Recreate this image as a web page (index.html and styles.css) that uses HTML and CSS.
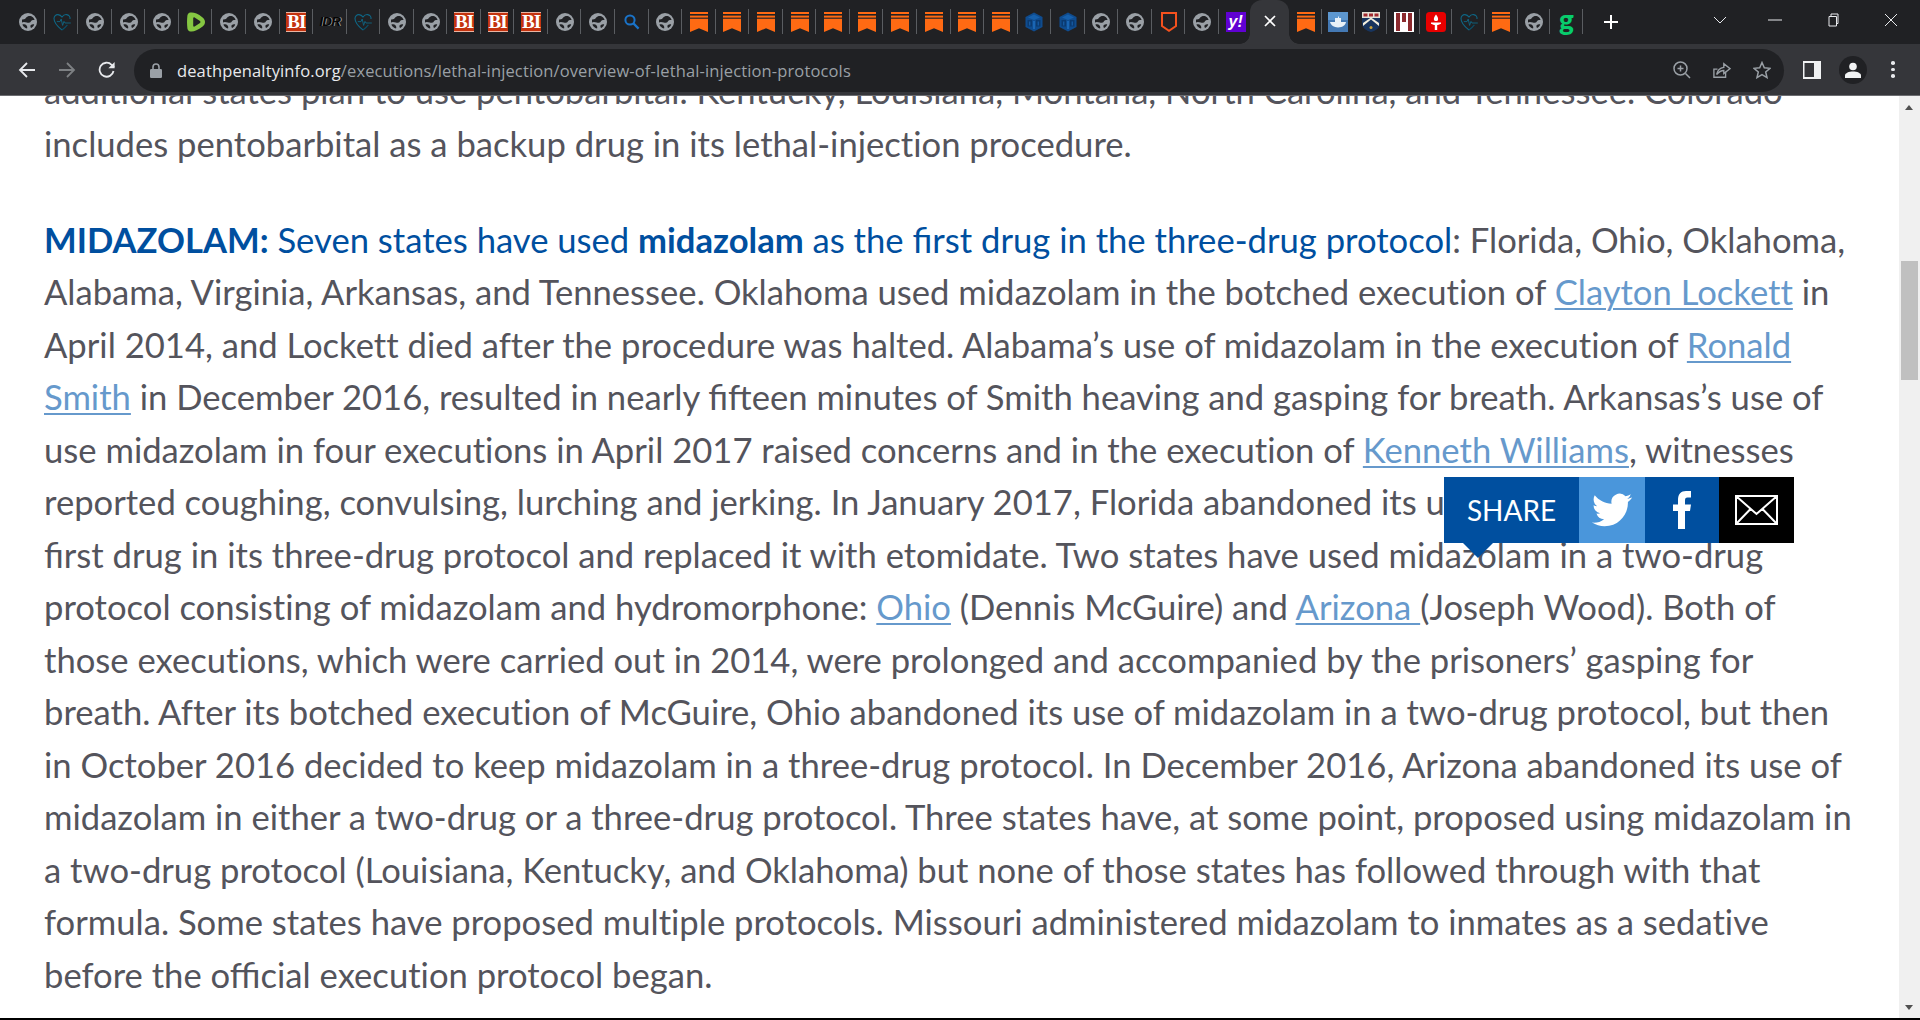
FILE: index.html
```html
<!DOCTYPE html>
<html lang="en">
<head>
<meta charset="utf-8">
<title>Overview of Lethal Injection Protocols</title>
<link rel="stylesheet" href="styles.css">
</head>
<body>
<svg class="defs" width="0" height="0" aria-hidden="true">
  <symbol id="globe" viewBox="0 0 18 18">
    <circle cx="9" cy="9" r="9" fill="#9aa0a6"/>
    <path d="M3 6.500C5 6.800 6.500 6 7.200 4.600 8.200 3 10.500 2.600 12.400 3.200 14 4 15.200 5.400 15.600 7 14 6.800 12.600 7.200 11.800 8.400 11 9.800 9.400 10.200 7.800 9.600 6 9 4.200 8.600 3 9.600Z" fill="#202124"/>
    <path d="M3.400 11.600C5 10.800 6.600 11.200 7.600 12.400 8.400 13.400 8.400 14.800 8 15.400 5.800 15.200 4.200 13.600 3.400 11.600Z" fill="#202124"/>
    <path d="M11.600 12.200C12.800 11.400 14.400 11 15.200 11.600 14.800 13 13.600 14.400 12.200 15 11.400 14.200 11.200 13 11.600 12.200Z" fill="#202124"/>
  </symbol>
  <symbol id="heart" viewBox="0 0 18 18">
    <path d="M9 17C5 14 1 10 1 5.600 1 3 3 1.400 5 1.600 6.600 1.800 8 2.600 9 4 10 2.600 12 1.400 13.600 1.600 15.800 1.900 17.400 3.600 17 6" fill="none" stroke="#0e6685" stroke-width="1.100"/>
    <path d="M3.800 8.600H7L8.200 6 9.600 12.400 11 8.400 12 10H17.800" fill="none" stroke="#0e6685" stroke-width=".9"/>
    <path d="M9 17C11 15.400 13 13.600 14.400 11.800" fill="none" stroke="#0a4f68" stroke-width="1.100"/>
  </symbol>
  <symbol id="rumble" viewBox="0 0 18 20">
    <path d="M3.400.6C1.800.8.6 2 .4 3.600-.1 8-.1 12 .4 16.400.6 18 1.800 19.200 3.400 19.400 6.400 19.800 10.400 18.800 15.600 14.600 18.800 12 18.800 8 15.600 5.400 10.400 1.200 6.400.2 3.400.6Z" fill="#85c742"/>
    <path d="M6.200 6.200V13.800C6.200 14.600 7 15 7.600 14.600L13 11C13.600 10.500 13.600 9.500 13 9L7.600 5.400C7 5 6.200 5.400 6.200 6.200Z" fill="#202124"/>
  </symbol>
  <symbol id="search" viewBox="0 0 18 18">
    <circle cx="7" cy="7" r="4.600" fill="none" stroke="#1a73c8" stroke-width="2"/>
    <path d="M10.400 10.400 15.600 15.600" stroke="#1a73c8" stroke-width="2.200"/>
  </symbol>
  <symbol id="bookmark" viewBox="0 0 18 20">
    <rect width="18" height="2" fill="#ff6a13"/>
    <rect y="3.600" width="18" height="2" fill="#ff6a13"/>
    <path d="M0 6.800H18V20L9 16.200 0 20Z" fill="#ff6a13"/>
  </symbol>
  <symbol id="cube" viewBox="0 0 18 20">
    <path d="M9 .5 17.500 5V15L9 19.500 .5 15V5Z" fill="#0f4c8f"/>
    <path d="M9 2.500 15 5.400 9 8 3 5.400Z" fill="#1660ac"/>
    <path d="M2.500 8H7V14.500H2.500ZM11 8H15.500V14.500H11Z" fill="#0b3a70"/>
    <path d="M8 9H10V17H8ZM4.300 9.500H5.300V13.500H4.300ZM12.700 9.500H13.700V13.500H12.700Z" fill="#1a66b4"/>
  </symbol>
  <symbol id="shield" viewBox="0 0 16 20">
    <path d="M1 1H15V14L8 18.800 1 14Z" fill="none" stroke="#f4511e" stroke-width="2"/>
  </symbol>
  <symbol id="docker" viewBox="0 0 20 20">
    <rect width="20" height="20" fill="#4479b4"/>
    <rect width="20" height="8" fill="#5d97cf"/>
    <path d="M2 10H7V6H10V4.500H11V6H13V10H18C17.600 13 15 15.400 10 15.400 6 15.400 3 13.400 2 10Z" fill="#e9f1f8"/>
  </symbol>
  <symbol id="crest" viewBox="0 0 18 20">
    <path d="M0 2H18V12C18 16 13 19 9 20 5 19 0 16 0 12Z" fill="#17345e"/>
    <rect width="18" height="6" y="0" fill="#e6e2d6"/>
    <rect x="1.500" y="1.500" width="4" height="3" fill="#a12a2f"/>
    <rect x="7" y="1.500" width="4" height="3" fill="#a12a2f"/>
    <rect x="12.500" y="1.500" width="4" height="3" fill="#a12a2f"/>
    <path d="M1 14 9 7.500 17 14V11L9 5.500 1 11Z" fill="#f3eedd"/>
    <circle cx="9" cy="15.500" r="1.500" fill="#c8a23c"/>
  </symbol>
  <symbol id="bars" viewBox="0 0 20 20">
    <rect width="20" height="20" fill="#fff"/>
    <path d="M2 1H6V19H2ZM8 1H12V10H8ZM14 1H18V19H14Z" fill="#8c2a2e"/>
  </symbol>
  <symbol id="torch" viewBox="0 0 20 20">
    <rect width="20" height="20" rx="3.500" fill="#e80000"/>
    <path d="M10 2.500C12 5 12.400 6.600 12 8 11.600 9.400 8.400 9.400 8 8 7.600 6.600 8 5 10 2.500Z" fill="#fff"/>
    <path d="M5 10.400H15V11.800L12 13H8L5 11.800ZM8.800 13H11.200V18H8.800Z" fill="#fff"/>
  </symbol>
  <symbol id="twitter" viewBox="0 0 24 24">
    <path d="M23.953 4.570a10 10 0 01-2.825.775 4.958 4.958 0 002.163-2.723c-.951.555-2.005.959-3.127 1.184a4.920 4.920 0 00-8.384 4.482C7.690 8.095 4.067 6.130 1.640 3.162a4.822 4.822 0 00-.666 2.475c0 1.710.870 3.213 2.188 4.096a4.904 4.904 0 01-2.228-.616v.060a4.923 4.923 0 003.946 4.827 4.996 4.996 0 01-2.212.085 4.936 4.936 0 004.604 3.417 9.867 9.867 0 01-6.102 2.105c-.390 0-.779-.023-1.170-.067a13.995 13.995 0 007.557 2.209c9.053 0 13.998-7.496 13.998-13.985 0-.210 0-.420-.015-.630A9.935 9.935 0 0024 4.590z" fill="#fff"/>
  </symbol>
</svg>

<header class="browser">
  <div class="strip">
    <div class="tabs tabs-left">
      <div class="tab sep"><svg class="fav"><use href="#globe"/></svg></div>
      <div class="tab sep"><svg class="fav"><use href="#heart"/></svg></div>
      <div class="tab sep"><svg class="fav"><use href="#globe"/></svg></div>
      <div class="tab sep"><svg class="fav"><use href="#globe"/></svg></div>
      <div class="tab sep"><svg class="fav"><use href="#globe"/></svg></div>
      <div class="tab sep"><svg class="fav tall"><use href="#rumble"/></svg></div>
      <div class="tab sep"><svg class="fav"><use href="#globe"/></svg></div>
      <div class="tab sep"><svg class="fav"><use href="#globe"/></svg></div>
      <div class="tab sep"><span class="ico-bi">BI</span></div>
      <div class="tab sep"><span class="ico-ldr">IDR</span></div>
      <div class="tab sep"><svg class="fav"><use href="#heart"/></svg></div>
      <div class="tab sep"><svg class="fav"><use href="#globe"/></svg></div>
      <div class="tab sep"><svg class="fav"><use href="#globe"/></svg></div>
      <div class="tab sep"><span class="ico-bi">BI</span></div>
      <div class="tab sep"><span class="ico-bi">BI</span></div>
      <div class="tab sep"><span class="ico-bi">BI</span></div>
      <div class="tab sep"><svg class="fav"><use href="#globe"/></svg></div>
      <div class="tab sep"><svg class="fav"><use href="#globe"/></svg></div>
      <div class="tab sep"><svg class="fav"><use href="#search"/></svg></div>
      <div class="tab sep"><svg class="fav"><use href="#globe"/></svg></div>
      <div class="tab sep"><svg class="fav tall"><use href="#bookmark"/></svg></div>
      <div class="tab sep"><svg class="fav tall"><use href="#bookmark"/></svg></div>
      <div class="tab sep"><svg class="fav tall"><use href="#bookmark"/></svg></div>
      <div class="tab sep"><svg class="fav tall"><use href="#bookmark"/></svg></div>
      <div class="tab sep"><svg class="fav tall"><use href="#bookmark"/></svg></div>
      <div class="tab sep"><svg class="fav tall"><use href="#bookmark"/></svg></div>
      <div class="tab sep"><svg class="fav tall"><use href="#bookmark"/></svg></div>
      <div class="tab sep"><svg class="fav tall"><use href="#bookmark"/></svg></div>
      <div class="tab sep"><svg class="fav tall"><use href="#bookmark"/></svg></div>
      <div class="tab sep"><svg class="fav tall"><use href="#bookmark"/></svg></div>
      <div class="tab sep"><svg class="fav tall"><use href="#cube"/></svg></div>
      <div class="tab sep"><svg class="fav tall"><use href="#cube"/></svg></div>
      <div class="tab sep"><svg class="fav"><use href="#globe"/></svg></div>
      <div class="tab sep"><svg class="fav"><use href="#globe"/></svg></div>
      <div class="tab sep"><svg class="fav tall"><use href="#shield"/></svg></div>
      <div class="tab sep"><svg class="fav"><use href="#globe"/></svg></div>
      <div class="tab"><span class="ico-yahoo">y!</span></div>
    </div>
    <div class="tab-active">
      <svg class="close-x" viewBox="0 0 12 12"><path d="M1 1 11 11M11 1 1 11"/></svg>
    </div>
    <div class="tabs tabs-right">
      <div class="tab sep"><svg class="fav tall"><use href="#bookmark"/></svg></div>
      <div class="tab sep"><svg class="fav wide"><use href="#docker"/></svg></div>
      <div class="tab sep"><svg class="fav tall"><use href="#crest"/></svg></div>
      <div class="tab sep"><svg class="fav wide"><use href="#bars"/></svg></div>
      <div class="tab sep"><svg class="fav wide"><use href="#torch"/></svg></div>
      <div class="tab sep"><svg class="fav"><use href="#heart"/></svg></div>
      <div class="tab sep"><svg class="fav tall"><use href="#bookmark"/></svg></div>
      <div class="tab sep"><svg class="fav"><use href="#globe"/></svg></div>
      <div class="tab sep"><span class="g-icon">g</span></div>
    </div>
    <svg class="new-tab" viewBox="0 0 16 16"><path d="M8 1V15M1 8H15"/></svg>
    <div class="window-controls">
      <svg class="win win-chevron" viewBox="0 0 14 14"><path d="M1 4 7 10 13 4"/></svg>
      <svg class="win win-min" viewBox="0 0 14 14"><path d="M0 7H14"/></svg>
      <svg class="win win-max" viewBox="0 0 14 14"><path d="M3 3.500H10.500V13H3ZM5 3.500V1H12V10.500H10.500"/></svg>
      <svg class="win win-close" viewBox="0 0 14 14"><path d="M1 1 13 13M13 1 1 13"/></svg>
    </div>
  </div>
  <div class="toolbar">
    <svg class="nav nav-back" viewBox="0 0 18 18"><path d="M17 9H2M9 2 2 9 9 16"/></svg>
    <svg class="nav nav-fwd" viewBox="0 0 18 18"><path d="M1 9H16M9 2 16 9 9 16"/></svg>
    <svg class="nav nav-reload" viewBox="0 0 18 18"><path d="M15.500 10A7 7 0 1 1 13.600 3.800L16 6.200"/><path class="nav-fill" d="M16.600 1V7.200H10.400Z"/></svg>
    <div class="omnibox">
      <svg class="lock" viewBox="0 0 12 15"><path d="M3 6V4A3 3 0 0 1 9 4V6" class="lock-shackle"/><rect y="6" width="12" height="9" rx="1.200" class="lock-body"/></svg>
      <div class="url"><span class="url-host">deathpenaltyinfo.org</span>/executions/lethal-injection/overview-of-lethal-injection-protocols</div>
      <div class="omni-actions">
        <svg class="omni-icon" viewBox="0 0 18 18"><circle cx="7.500" cy="7.500" r="6.500"/><path d="M12.500 12.500 17 17M7.500 4.500V10.500M4.500 7.500H10.500"/></svg>
        <svg class="omni-icon" viewBox="0 0 20 18"><path d="M14 11V17H1V8H5"/><path d="M4 14C5 9 8 6.500 12 6V2L19 7.500 12 13V9.500C9 9.500 6.500 11 4 14Z"/></svg>
        <svg class="omni-icon" viewBox="0 0 18 18"><path d="M9 1.500 11.300 6.700 17 7.300 12.700 11 14 16.600 9 13.700 4 16.600 5.300 11 1 7.300 6.700 6.700Z"/></svg>
      </div>
    </div>
    <svg class="panel" viewBox="0 0 18 18"><rect width="18" height="18" fill="#f1f3f4"/><rect x="1.500" y="2" width="9.500" height="14" fill="#35363a"/></svg>
    <div class="avatar">
      <svg viewBox="0 0 16 16"><circle cx="8" cy="4.500" r="3.800"/><path d="M0 16V13.500C0 11 4 9.500 8 9.500S16 11 16 13.500V16Z"/></svg>
    </div>
    <div class="menu-dots"><i></i><i></i><i></i></div>
  </div>
</header>

<main class="viewport">
  <div class="content">
    <article class="article">
      <p>additional states plan to use pentobarbital. Kentucky, Louisiana, Montana, North Carolina, and Tennessee. Colorado<br>includes pentobarbital as a backup drug in its lethal-injection procedure.</p>
      <p><strong class="blue">MIDAZOLAM:</strong> <span class="blue">Seven states have used <strong>midazolam</strong> as the <span class="lig">first</span> drug in the three-drug protocol</span>: Florida, Ohio, Oklahoma,<br>Alabama, Virginia, Arkansas, and Tennessee. Oklahoma used midazolam in the botched execution of <a href="#">Clayton Lockett</a> in<br>April 2014, and Lockett died after the procedure was halted. Alabama’s use of midazolam in the execution of <a href="#">Ronald<br>Smith</a> in December 2016, resulted in nearly <span class="lig">fifteen</span> minutes of Smith heaving and gasping for breath. Arkansas’s use of<br>use midazolam in four executions in April 2017 raised concerns and in the execution of <a href="#">Kenneth Williams</a>, witnesses<br>reported coughing, convulsing, lurching and jerking. In January 2017, Florida abandoned its use of midazolam as the<br><span class="lig">first</span> drug in its three-drug protocol and replaced it with etomidate. Two states have used midazolam in a two-drug<br>protocol consisting of midazolam and hydromorphone: <a href="#">Ohio</a> (Dennis McGuire) and <a href="#">Arizona </a>(Joseph Wood). Both of<br>those executions, which were carried out in 2014, were prolonged and accompanied by the prisoners’ gasping for<br>breath. After its botched execution of McGuire, Ohio abandoned its use of midazolam in a two-drug protocol, but then<br>in October 2016 decided to keep midazolam in a three-drug protocol. In December 2016, Arizona abandoned its use of<br>midazolam in either a two-drug or a three-drug protocol. Three states have, at some point, proposed using midazolam in<br>a two-drug protocol (Louisiana, Kentucky, and Oklahoma) but none of those states has followed through with that<br>formula. Some states have proposed multiple protocols. Missouri administered midazolam to inmates as a sedative<br>before the <span class="lig">official</span> execution protocol began.</p>
    </article>
    <div class="share">
      <div class="share-label">SHARE</div>
      <div class="share-btn share-tw"><svg class="tw-icon"><use href="#twitter"/></svg></div>
      <div class="share-btn share-fb"><svg class="fb-icon" viewBox="0 0 18 38"><path d="M5 38V20H0V13.500H5V9C5 3 8 0 13 0H18V6.500H14.500C12.500 6.500 12 7.500 12 9.500V13.500H18L17 20H12V38Z"/></svg></div>
      <div class="share-btn share-mail"><svg class="mail-icon" viewBox="0 0 43 30"><path d="M1 1H42V29H1ZM1 1 21.500 19 42 1M1 29 15.500 14M42 29 27.500 14"/></svg></div>
    </div>
  </div>
  <div class="scrollbar">
    <span class="arrow-up"></span>
    <span class="thumb"></span>
    <span class="arrow-down"></span>
  </div>
</main>
<div class="bottom-edge"></div>
</body>
</html>
```
FILE: styles.css
```css
* { box-sizing: border-box; }
html, body { margin: 0; height: 100%; }
body {
  width: 1920px;
  height: 1020px;
  overflow: hidden;
  display: flex;
  flex-direction: column;
  background: #fff;
  font-family: "Lato", sans-serif;
}
.defs { position: absolute; }

.browser { flex: none; height: 96px; background: #35363a; border-bottom: 1px solid #6b6c70; }
.strip { height: 44px; background: #202124; display: flex; align-items: flex-start; position: relative; }
.tabs { display: flex; height: 43px; }
.tabs-left { padding-left: 11.2px; --tab-w: 33.56px; }
.tabs-right { --tab-w: 32.6px; }
.tab {
  width: var(--tab-w);
  height: 43px;
  flex: none;
  display: flex;
  align-items: center;
  justify-content: center;
  position: relative;
}
.tab.sep::after {
  content: "";
  position: absolute;
  right: 0;
  top: 9px;
  height: 25px;
  width: 1px;
  background: #5a5d61;
}
.fav { width: 18px; height: 18px; flex: none; }
.fav.tall { width: 18px; height: 20px; }
.fav.wide { width: 20px; height: 20px; }
.ico-bi {
  width: 20px;
  height: 20px;
  flex: none;
  overflow: hidden;
  background: #c4330f;
  color: #fff;
  font: bold 19px/18px "Liberation Serif", serif;
  letter-spacing: -1px;
  text-align: center;
  border-top: 1px solid #e9b5a3;
  border-bottom: 1px solid #e9b5a3;
}
.ico-ldr {
  font: italic bold 13px/20px "Liberation Sans", sans-serif;
  color: #050505;
  letter-spacing: -.5px;
  text-shadow: 1px 0 0 #9a9a9a;
  width: 22px;
  text-align: center;
  flex: none;
}
.ico-yahoo {
  width: 20px;
  height: 20px;
  flex: none;
  overflow: hidden;
  background: #6001d2;
  color: #fff;
  font: italic bold 16px/20px "Liberation Sans", sans-serif;
  text-align: center;
}
.g-icon { font: 900 28px/1 "Lato", sans-serif; color: #08cc6c; margin-top: -6px; }

.tab-active {
  flex: none;
  width: 39px;
  margin-left: -2px;
  height: 44px;
  background: #35363a;
  border-radius: 12px 12px 0 0;
  display: flex;
  align-items: center;
  justify-content: center;
  position: relative;
  padding-bottom: 2px;
}
.tab-active::before, .tab-active::after {
  content: "";
  position: absolute;
  bottom: 0;
  width: 10px;
  height: 10px;
  background: radial-gradient(circle at var(--cx) 0, #202124 9.5px, #35363a 10px);
}
.tab-active::before { left: -10px; --cx: 0; }
.tab-active::after { right: -10px; --cx: 100%; }
.close-x { width: 12px; height: 12px; stroke: #fff; stroke-width: 1.7; fill: none; }

.new-tab { width: 16px; height: 16px; margin: 14px 0 0 20px; stroke: #fff; stroke-width: 2; flex: none; }
.window-controls { margin-left: auto; height: 43px; display: flex; align-items: center; padding-right: 22px; }
.win { width: 14px; height: 14px; stroke: #e8eaed; stroke-width: 1; fill: none; flex: none; margin-top: -4px; }
.win-chevron { margin-right: 41px; }
.win-min { margin-right: 44px; }
.win-max { margin-right: 44px; }

.toolbar { height: 51px; display: flex; align-items: center; padding: 0 0 0 18px; }
.nav { width: 18px; height: 18px; stroke: #e8eaed; stroke-width: 1.8; fill: none; flex: none; margin-right: 22px; }
.nav-fwd { stroke: #7d8083; }
.nav-fill { fill: #e8eaed; stroke: none; }
.nav-reload { margin-right: 0; }
.omnibox {
  margin-left: 18px;
  width: 1650px;
  height: 43px;
  border-radius: 22px;
  background: #202124;
  display: flex;
  align-items: center;
  padding-left: 16px;
  margin-top: 1px;
}
.lock { width: 12px; height: 15px; flex: none; margin-right: 15px; }
.lock-shackle { fill: none; stroke: #9aa0a6; stroke-width: 1.6; }
.lock-body { fill: #9aa0a6; }
.url { font: 16.5px "Open Sans", sans-serif; color: #9aa0a6; white-space: nowrap; letter-spacing: .13px; }
.url-host { color: #e8eaed; }
.omni-actions { margin-left: auto; display: flex; align-items: center; gap: 22px; padding-right: 13px; }
.omni-icon { width: 18px; height: 18px; stroke: #9aa0a6; stroke-width: 1.5; fill: none; flex: none; }
.panel { width: 18px; height: 18px; flex: none; margin-left: 19px; }
.avatar {
  width: 28px;
  height: 28px;
  border-radius: 50%;
  background: #202124;
  margin-left: 18px;
  flex: none;
  display: flex;
  align-items: center;
  justify-content: center;
}
.avatar svg { width: 16px; height: 16px; fill: #f1f3f4; }
.menu-dots { margin-left: 24px; display: flex; flex-direction: column; gap: 3px; }
.menu-dots i { width: 3.5px; height: 3.5px; border-radius: 50%; background: #e8eaed; display: block; }

.viewport { flex: 1; min-height: 0; display: flex; position: relative; overflow: hidden; }
.content { flex: 1; min-width: 0; overflow: hidden; }
.article {
  margin-top: -31px;
  padding-left: 44px;
  font-size: 34.62px;
  line-height: 52.5px;
  color: #54545c;
  white-space: nowrap;
  font-variant-ligatures: none;
}
.article p { margin: 0 0 43.5px; }
.article .lig { font-variant-ligatures: normal; }
.article a { color: #6699cc; text-decoration: underline; text-decoration-thickness: 2px; text-underline-offset: 3px; }
.blue { color: #004f9f; }
.article strong { font-weight: 700; }

.share {
  position: absolute;
  left: 1444px;
  top: 381px;
  height: 66px;
  width: 350px;
  display: flex;
}
.share::after {
  content: "";
  position: absolute;
  left: 19px;
  top: 66px;
  border-left: 15.5px solid transparent;
  border-right: 15.5px solid transparent;
  border-top: 15px solid #004f9f;
}
.share-label {
  width: 135px;
  background: #004f9f;
  color: #fff;
  font-size: 28px;
  display: flex;
  align-items: center;
  justify-content: center;
}
.share-btn { display: flex; align-items: center; justify-content: center; }
.share-tw { width: 66px; background: #4a96db; }
.share-fb { width: 74px; background: #004f9f; }
.share-mail { width: 75px; background: #000; }
.tw-icon { width: 40px; height: 40px; }
.fb-icon { width: 18px; height: 38px; fill: #fff; }
.mail-icon { width: 43px; height: 30px; fill: none; stroke: #fff; stroke-width: 2; }

.scrollbar { width: 21px; flex: none; background: #f0f0f0; position: relative; }
.thumb { position: absolute; left: 2px; width: 17px; top: 165px; height: 119px; background: #c0c0c0; }
.arrow-up, .arrow-down {
  position: absolute;
  left: 6px;
  border-left: 4.5px solid transparent;
  border-right: 4.5px solid transparent;
}
.arrow-up { top: 9px; border-bottom: 5px solid #505050; }
.arrow-down { bottom: 8px; border-top: 5px solid #505050; }
.bottom-edge { flex: none; height: 2px; background: #000; }
```
